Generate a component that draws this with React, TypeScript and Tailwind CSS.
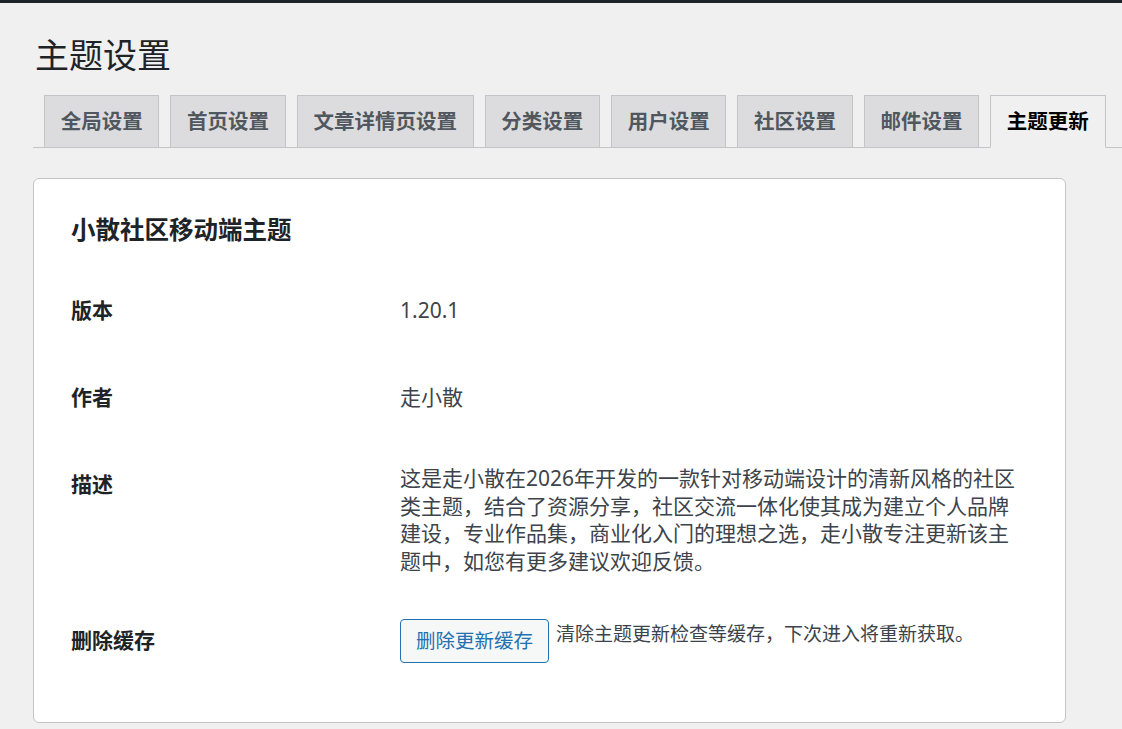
const font = { fontFamily: '"Noto Sans", "Noto Sans CJK SC", sans-serif' };

const tabs = ['全局设置', '首页设置', '文章详情页设置', '分类设置', '用户设置', '社区设置', '邮件设置', '主题更新'];

function Row({ label, children, valueClass = 'pt-[30px]' }: { label: string; children: React.ReactNode; valueClass?: string }) {
  return (
    <div className="flex">
      <div className="w-[329px] shrink-0 pt-[30px] pb-[30px] text-[21px] leading-[27px] font-bold text-[#1d2327]">{label}</div>
      <div className={`${valueClass} text-[21px] leading-[27.5px] text-[#3c434a]`}>{children}</div>
    </div>
  );
}

export default function App() {
  return (
    <div className="min-h-[729px] bg-[#f0f0f1]" style={font}>
      <div className="h-[3px] bg-[#1d2327]" />
      <div className="pl-[33px]">
        <h1 className="pt-[31px] pl-[2px] text-[34px] leading-[42px] text-[#1d2327]">主题设置</h1>
        <div className="mt-[19px] flex border-b border-[#c3c4c7] pl-[11px]">
          {tabs.map((t, i) => {
            const active = i === tabs.length - 1;
            return (
              <div
                key={t}
                className={`-mb-px mr-[11px] border border-[#c3c4c7] px-[15.7px] py-[8px] text-[20.5px] leading-[35px] font-bold ${
                  active ? 'border-b-[#f0f0f1] bg-[#f0f0f1] text-[#000]' : 'bg-[#dcdcde] text-[#50575e]'
                }`}
              >
                {t}
              </div>
            );
          })}
        </div>
        <div className="mt-[30px] w-[1033px] rounded-[6px] border border-[#c3c4c7] bg-white px-[37px] pt-[36px] pb-[37px]">
          <h2 className="text-[24.5px] leading-[30px] font-bold text-[#1d2327]">小散社区移动端主题</h2>
          <div className="mt-[22px]">
            <Row label="版本">1.20.1</Row>
            <Row label="作者">走小散</Row>
            <Row label="描述" valueClass="pt-[24px] pb-[22px]">
              <p className="w-[616px]">
                这是走小散在2026年开发的一款针对移动端设计的清新风格的社区类主题，结合了资源分享，社区交流一体化使其成为建立个人品牌建设，专业作品集，商业化入门的理想之选，走小散专注更新该主题中，如您有更多建议欢迎反馈。
              </p>
            </Row>
            <div className="flex">
              <div className="w-[329px] shrink-0 pt-[30px] pb-[30px] text-[21px] leading-[27px] font-bold text-[#1d2327]">删除缓存</div>
              <div className="flex items-start pt-[22px] pb-[22px]">
                <button className="h-[44px] rounded-[4px] border border-[#2271b1] bg-[#f6f7f7] px-[15px] text-[19.5px] text-[#2271b1]">
                  删除更新缓存
                </button>
                <span className="ml-[7px] pt-[2px] text-[19px] leading-[27px] text-[#3c434a]">清除主题更新检查等缓存，下次进入将重新获取。</span>
              </div>
            </div>
          </div>
        </div>
      </div>
    </div>
  );
}
